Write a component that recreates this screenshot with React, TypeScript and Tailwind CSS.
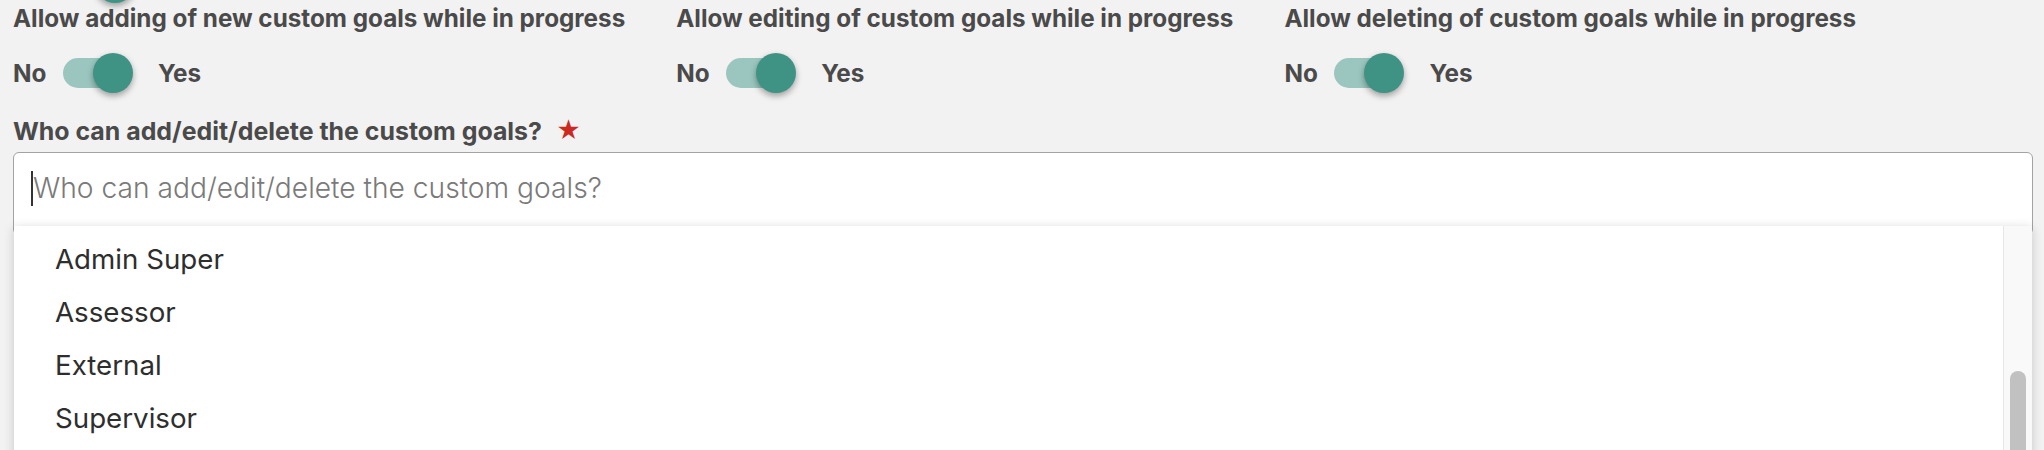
import React from 'react';

// =====================================================
// Toggle switch (checked state only, as in the form)
// =====================================================

function YesNoToggle({ checked = true }: { checked?: boolean }) {
  return (
    <div className="flex items-center h-[40px]">
      <span className="text-[24.3px] font-bold text-[#4a4a4a] leading-none w-[50px]">No</span>
      <div className="relative w-[70px] h-[40px] flex items-center">
        <div className="w-[60px] h-[30px] rounded-full bg-[#9bc6bf]" />
        <div
          className={`absolute top-0 w-[40px] h-[40px] rounded-full bg-[#3f9384] shadow-[0_3px_6px_rgba(0,0,0,0.35)] ${
            checked ? 'left-[30px]' : 'left-0'
          }`}
        />
      </div>
      <span className="ml-[25px] text-[24.3px] font-bold text-[#4a4a4a] leading-none">Yes</span>
    </div>
  );
}

function ToggleField({ label }: { label: string }) {
  return (
    <div className="flex flex-col">
      <div className="text-[24.25px] font-bold text-[#4a4a4a] leading-[30px] whitespace-nowrap">{label}</div>
      <div className="mt-[19px]">
        <YesNoToggle />
      </div>
    </div>
  );
}

const roles = ['Admin Super', 'Assessor', 'External', 'Supervisor'];

export default function App() {
  return (
    <div
      className="relative w-full h-[450px] overflow-hidden bg-[#f2f2f2]"
      style={{ fontFamily: 'Inter, "Noto Sans", sans-serif' }}
    >
      {/* knob of the row above, cut off by the viewport */}
      <div className="absolute left-[95px] top-[-37px] w-[40px] h-[40px] rounded-full bg-[#3f9384] shadow-[0_3px_6px_rgba(0,0,0,0.35)]" />

      <div className="px-[13px] pt-[4px]">
        <div className="flex gap-[51px]">
          <ToggleField label="Allow adding of new custom goals while in progress" />
          <ToggleField label="Allow editing of custom goals while in progress" />
          <ToggleField label="Allow deleting of custom goals while in progress" />
        </div>

        <div className="mt-[23px] flex items-center text-[24.9px] font-bold text-[#4a4a4a] leading-[30px]">
          <span>Who can add/edit/delete the custom goals?</span>
          <span className="ml-[14px] text-[#cc2a1f] text-[24px] leading-none">★</span>
        </div>

        <div className="mt-[6px] mr-[-2px] h-[83px] rounded-[6px] border border-[#a3a3a3] bg-white flex items-start pt-[18px] pl-[17px]">
          <span className="w-[2px] h-[35px] bg-[#333]" />
          <span className="text-[28.2px] font-light text-[#7a7a7a] leading-[35px]">
            Who can add/edit/delete the custom goals?
          </span>
        </div>
      </div>

      {/* open dropdown menu */}
      <div className="absolute left-[14px] right-[12px] top-[226px] h-[260px] bg-white shadow-[0_2px_10px_rgba(0,0,0,0.18)] flex">
        <div className="flex-1 pt-[7px]">
          {roles.map(role => (
            <div key={role} className="h-[53px] flex items-center pl-[41px] text-[27.7px] text-[#2e2e2e]">
              {role}
            </div>
          ))}
        </div>
        <div className="w-[29px] bg-[#f9f9f9] border-l border-[#e6e6e6] pt-[145px] flex justify-center">
          <div className="w-[16px] h-[200px] rounded-full bg-[#c1c1c1]" />
        </div>
      </div>
    </div>
  );
}
